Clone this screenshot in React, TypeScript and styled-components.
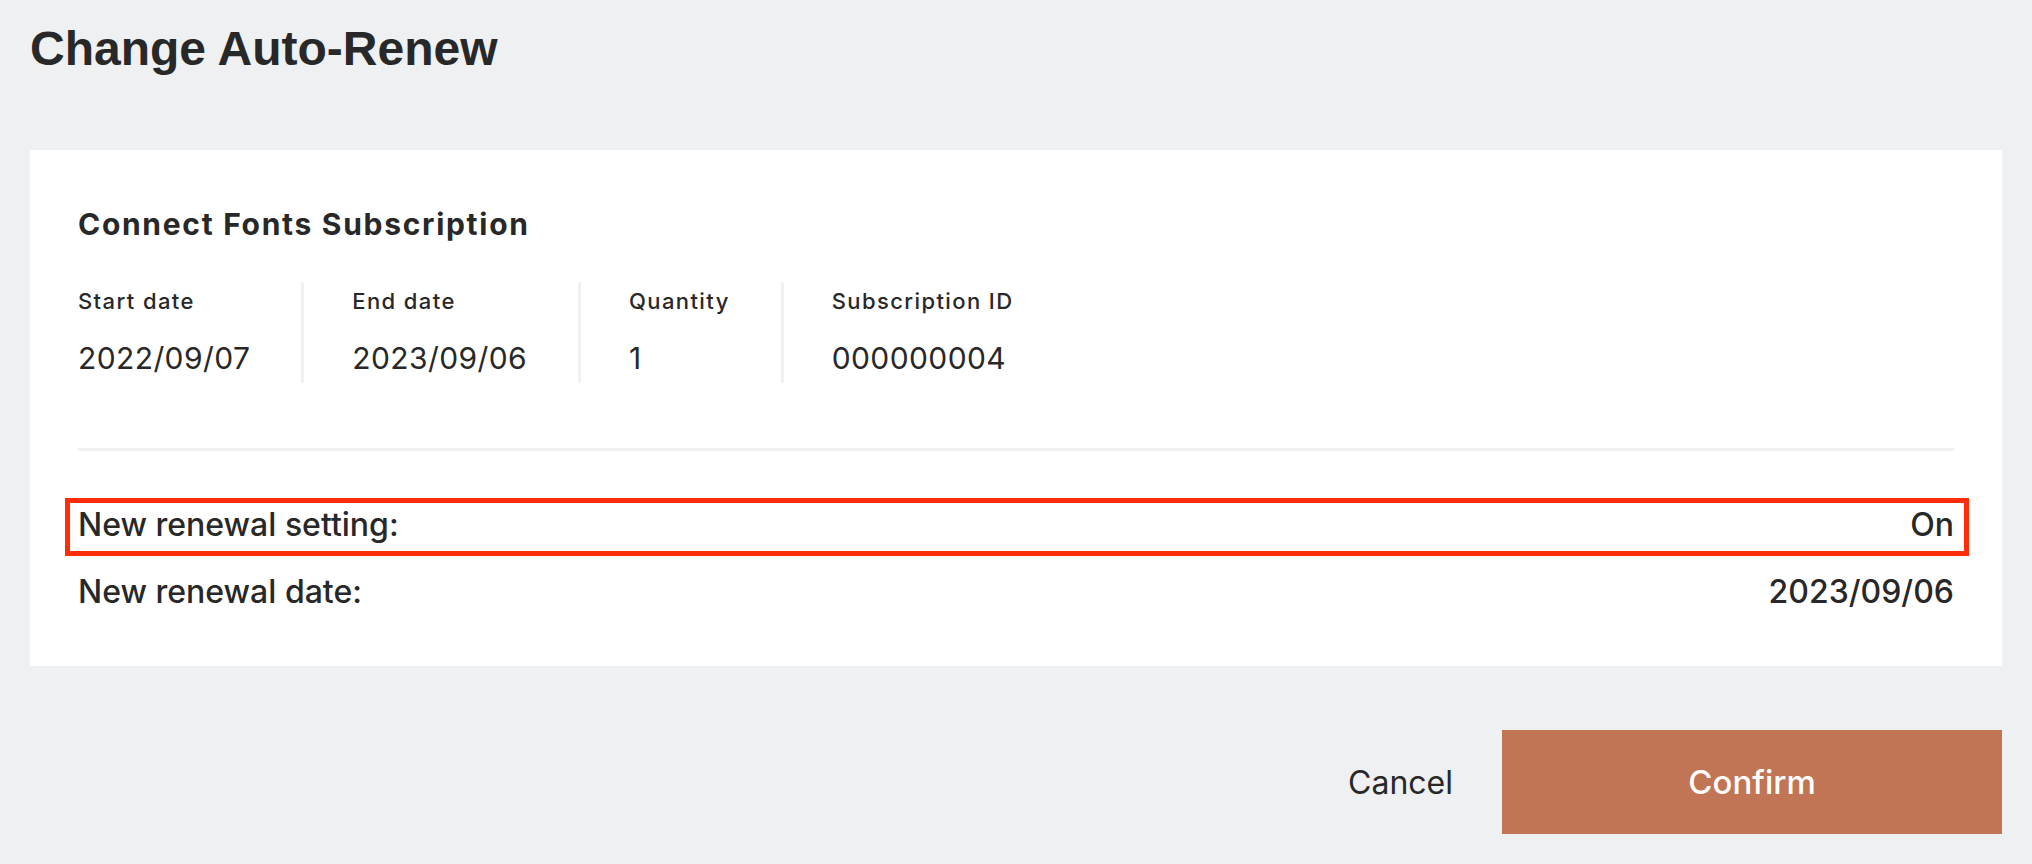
import React from "react";
import styled, { createGlobalStyle } from "styled-components";

const GlobalStyle = createGlobalStyle`
  body {
    margin: 0;
    background: #eff0f2;
    color: #282828;
    font-family: Inter, "Open Sans", "Liberation Sans", sans-serif;
  }
`;

const Page = styled.main`
  padding: 25px 30px 30px;
`;

const Title = styled.h1`
  margin: 0 0 77px;
  font-family: "Liberation Sans", Arial, sans-serif;
  font-size: 48px;
  line-height: 48px;
  font-weight: 700;
`;

const Card = styled.section`
  background: #ffffff;
  padding: 56px 48px 50px;
`;

const CardTitle = styled.h2`
  margin: 0 0 40px;
  font-size: 30px;
  line-height: 36px;
  font-weight: 700;
  letter-spacing: 1.7px;
`;

const Details = styled.div`
  display: flex;
`;

const DetailCell = styled.div`
  display: flex;
  flex-direction: column;
  padding: 0 51px 0 48px;
  border-left: 3px solid #f1f1f2;

  &:first-child {
    padding-left: 0;
    border-left: 0;
  }
`;

const DetailLabel = styled.span`
  font-size: 22px;
  line-height: 38px;
  font-weight: 500;
  letter-spacing: 1.4px;
  margin-bottom: 13px;
`;

const DetailValue = styled.span`
  font-size: 30px;
  line-height: 50px;
  font-weight: 400;
  letter-spacing: 0.4px;
`;

const Divider = styled.hr`
  margin: 65px 0 50px;
  border: 0;
  height: 3px;
  background: #f1f1f2;
`;

const Summary = styled.div`
  display: flex;
  flex-direction: column;
  gap: 19px;
`;

const SummaryRow = styled.div<{ $highlighted?: boolean }>`
  position: relative;
  display: flex;
  justify-content: space-between;
  font-size: 32px;
  line-height: 48px;
  font-weight: 500;

  &::after {
    content: "";
    display: ${(p) => (p.$highlighted ? "block" : "none")};
    position: absolute;
    top: -3px;
    bottom: -7px;
    left: -13px;
    right: -15px;
    border: 5px solid #ff2d0a;
    pointer-events: none;
  }
`;

const Actions = styled.div`
  display: flex;
  justify-content: flex-end;
  align-items: center;
  margin-top: 64px;
`;

const CancelButton = styled.button`
  margin-right: 49px;
  padding: 0;
  border: 0;
  background: none;
  color: #282828;
  font-family: inherit;
  font-size: 32px;
  font-weight: 400;
  cursor: pointer;
`;

const ConfirmButton = styled.button`
  width: 500px;
  height: 104px;
  border: 0;
  background: #c17554;
  color: #ffffff;
  font-family: inherit;
  font-size: 33px;
  font-weight: 500;
  cursor: pointer;
`;

const details = [
  { label: "Start date", value: "2022/09/07" },
  { label: "End date", value: "2023/09/06" },
  { label: "Quantity", value: "1" },
  { label: "Subscription ID", value: "000000004" },
];

const App: React.FC = () => {
  return (
    <Page>
      <GlobalStyle />
      <Title>Change Auto-Renew</Title>
      <Card>
        <CardTitle>Connect Fonts Subscription</CardTitle>
        <Details>
          {details.map((d) => (
            <DetailCell key={d.label}>
              <DetailLabel>{d.label}</DetailLabel>
              <DetailValue>{d.value}</DetailValue>
            </DetailCell>
          ))}
        </Details>
        <Divider />
        <Summary>
          <SummaryRow $highlighted>
            <span>New renewal setting:</span>
            <span>On</span>
          </SummaryRow>
          <SummaryRow>
            <span>New renewal date:</span>
            <span>2023/09/06</span>
          </SummaryRow>
        </Summary>
      </Card>
      <Actions>
        <CancelButton>Cancel</CancelButton>
        <ConfirmButton>Confirm</ConfirmButton>
      </Actions>
    </Page>
  );
};

export default App;
